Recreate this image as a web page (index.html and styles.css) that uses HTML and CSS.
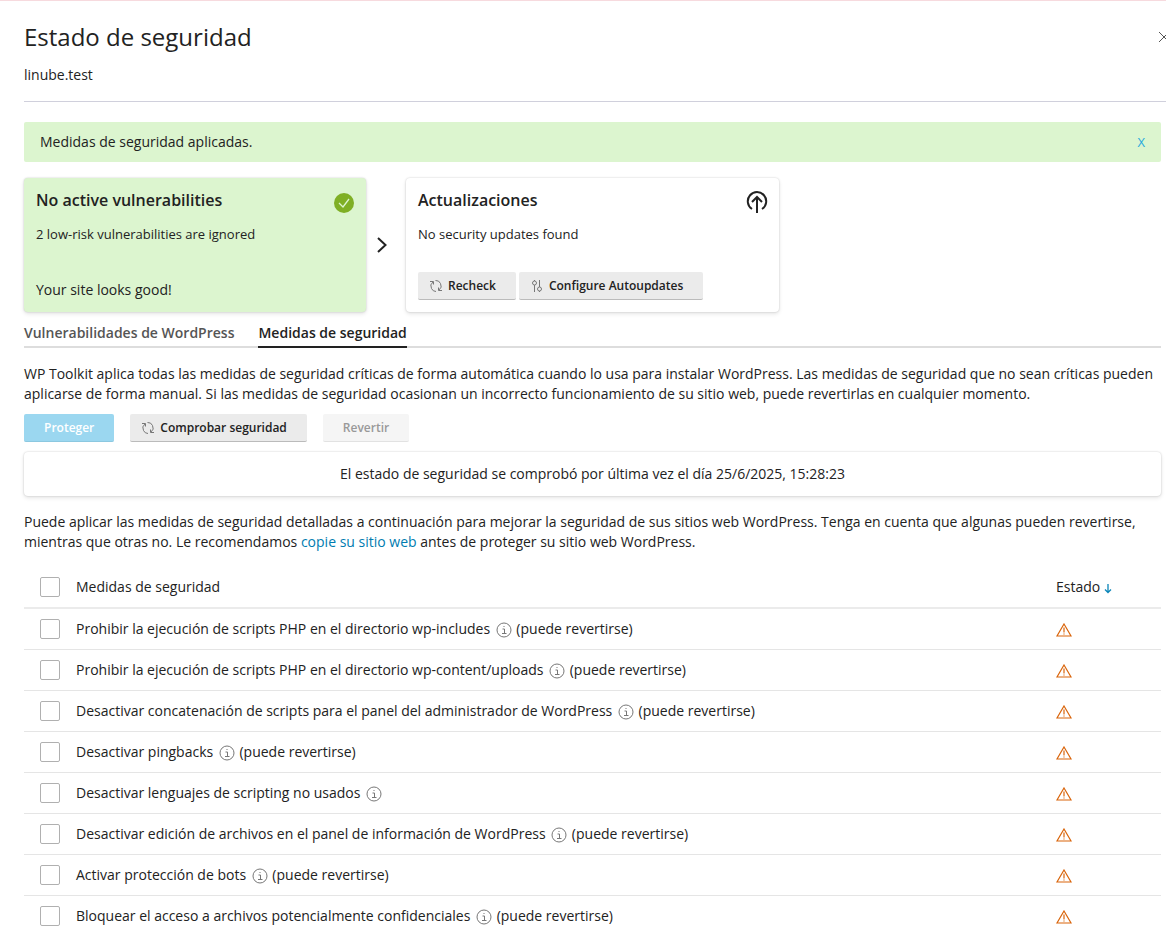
FILE: index.html
```html
<!DOCTYPE html>
<html lang="es">
<head>
    <meta charset="utf-8">
    <meta name="viewport" content="width=device-width, initial-scale=1">
    <title>Estado de seguridad</title>
    <link rel="stylesheet" href="styles.css">
</head>
<body>
<!-- Shared icons -->
<svg class="icon-defs" aria-hidden="true">
    <symbol id="icon-refresh" viewBox="0 0 12 12">
        <path d="M0 1.500h3.500V4.500M3 2A5 5 0 0 0 1.500 8.500 5 5 0 0 0 6 11.500M12 10.500H8.500V7.500M9 10A5 5 0 0 0 10.500 3.500 5 5 0 0 0 5.500 .5"/>
    </symbol>
    <symbol id="icon-info" viewBox="0 0 16 16">
        <circle cx="8" cy="8" r="7"/>
        <path d="M6.500 7h2v4.500M6 11.500h4.500M7.500 4.500h1"/>
    </symbol>
    <symbol id="icon-warning" viewBox="0 0 16 14">
        <path d="M8 1L15 13H1zM8 4.500v5M8 10.500v1"/>
    </symbol>
</svg>

<header class="header">
    <div>
        <h1 class="title">Estado de seguridad</h1>
        <div class="subtitle">linube.test</div>
    </div>
    <button type="button" class="close" aria-label="Cerrar">
        <svg width="12" height="12" viewBox="0 0 12 12"><path d="M1 1l10 10M11 1L1 11"/></svg>
    </button>
</header>

<main class="content">
    <div class="alert">
        <span>Medidas de seguridad aplicadas.</span>
        <button type="button" class="alert-close">X</button>
    </div>

    <div class="cards">
        <section class="card card-ok">
            <div class="card-head">
                <h2>No active vulnerabilities</h2>
                <svg class="card-icon" width="22" height="24" viewBox="0 0 22 24">
                    <circle cx="11" cy="13" r="10" fill="#7faf25"/>
                    <path d="M6 13l4 4 6-8" fill="none" stroke="#dcf5cf" stroke-width="1.3"/>
                </svg>
            </div>
            <p class="card-note">2 low-risk vulnerabilities are ignored</p>
            <p class="card-foot">Your site looks good!</p>
        </section>
        <svg class="chevron" width="10" height="16" viewBox="0 0 10 16"><path d="M1 1l7.500 7L1 15"/></svg>
        <section class="card card-updates">
            <div class="card-head">
                <h2>Actualizaciones</h2>
                <svg class="card-icon" width="22" height="24" viewBox="0 0 22 24" fill="none" stroke="#222" stroke-width="2">
                    <path d="M6 19A9.200 9.200 0 1 1 16 19M11 23V7M6 12l5-5 5 5"/>
                </svg>
            </div>
            <p class="card-note">No security updates found</p>
            <div class="card-foot">
                <button type="button" class="btn btn-icon"><svg width="12" height="12"><use href="#icon-refresh"/></svg>Recheck</button>
                <button type="button" class="btn btn-icon"><svg width="12" height="12" viewBox="0 0 12 12"><circle cx="3.500" cy="3" r="2"/><circle cx="8.500" cy="9" r="2"/><path d="M3.500 5v7M8.500 0v7M8.500 11v1M3.500 0v1"/></svg>Configure Autoupdates</button>
            </div>
        </section>
    </div>

    <nav class="tabs">
        <a href="#" class="tab">Vulnerabilidades de WordPress</a>
        <a href="#" class="tab active">Medidas de seguridad</a>
    </nav>

    <p class="intro">WP Toolkit aplica todas las medidas de seguridad críticas de forma automática cuando lo usa para instalar WordPress. Las medidas de seguridad que no sean críticas pueden aplicarse de forma manual. Si las medidas de seguridad ocasionan un incorrecto funcionamiento de su sitio web, puede revertirlas en cualquier momento.</p>

    <div class="toolbar">
        <button type="button" class="btn btn-primary" disabled>Proteger</button>
        <button type="button" class="btn btn-icon"><svg width="12" height="12"><use href="#icon-refresh"/></svg>Comprobar seguridad</button>
        <button type="button" class="btn btn-muted" disabled>Revertir</button>
    </div>

    <div class="last-check">El estado de seguridad se comprobó por última vez el día 25/6/2025, 15:28:23</div>

    <p class="help">Puede aplicar las medidas de seguridad detalladas a continuación para mejorar la seguridad de sus sitios web WordPress. Tenga en cuenta que algunas pueden revertirse, mientras que otras no. Le recomendamos <a href="#">copie su sitio web</a> antes de proteger su sitio web WordPress.</p>

    <table class="measures">
        <thead>
            <tr>
                <th class="col-check"><input type="checkbox" id="all"></th>
                <th><label for="all">Medidas de seguridad</label></th>
                <th class="col-state">Estado <svg class="sort" width="8" height="10" viewBox="0 0 8 10"><path d="M4 0v8.500M1 5.500l3 3 3-3"/></svg></th>
            </tr>
        </thead>
        <tbody>
            <tr>
                <td><input type="checkbox" id="m1"></td>
                <td><label for="m1">Prohibir la ejecución de scripts PHP en el directorio wp-includes <svg class="info"><use href="#icon-info"/></svg> (puede revertirse)</label></td>
                <td class="col-state"><svg class="warning"><use href="#icon-warning"/></svg></td>
            </tr>
            <tr>
                <td><input type="checkbox" id="m2"></td>
                <td><label for="m2">Prohibir la ejecución de scripts PHP en el directorio wp-content/uploads <svg class="info"><use href="#icon-info"/></svg> (puede revertirse)</label></td>
                <td class="col-state"><svg class="warning"><use href="#icon-warning"/></svg></td>
            </tr>
            <tr>
                <td><input type="checkbox" id="m3"></td>
                <td><label for="m3">Desactivar concatenación de scripts para el panel del administrador de WordPress <svg class="info"><use href="#icon-info"/></svg> (puede revertirse)</label></td>
                <td class="col-state"><svg class="warning"><use href="#icon-warning"/></svg></td>
            </tr>
            <tr>
                <td><input type="checkbox" id="m4"></td>
                <td><label for="m4">Desactivar pingbacks <svg class="info"><use href="#icon-info"/></svg> (puede revertirse)</label></td>
                <td class="col-state"><svg class="warning"><use href="#icon-warning"/></svg></td>
            </tr>
            <tr>
                <td><input type="checkbox" id="m5"></td>
                <td><label for="m5">Desactivar lenguajes de scripting no usados <svg class="info"><use href="#icon-info"/></svg></label></td>
                <td class="col-state"><svg class="warning"><use href="#icon-warning"/></svg></td>
            </tr>
            <tr>
                <td><input type="checkbox" id="m6"></td>
                <td><label for="m6">Desactivar edición de archivos en el panel de información de WordPress <svg class="info"><use href="#icon-info"/></svg> (puede revertirse)</label></td>
                <td class="col-state"><svg class="warning"><use href="#icon-warning"/></svg></td>
            </tr>
            <tr>
                <td><input type="checkbox" id="m7"></td>
                <td><label for="m7">Activar protección de bots <svg class="info"><use href="#icon-info"/></svg> (puede revertirse)</label></td>
                <td class="col-state"><svg class="warning"><use href="#icon-warning"/></svg></td>
            </tr>
            <tr>
                <td><input type="checkbox" id="m8"></td>
                <td><label for="m8">Bloquear el acceso a archivos potencialmente confidenciales <svg class="info"><use href="#icon-info"/></svg> (puede revertirse)</label></td>
                <td class="col-state"><svg class="warning"><use href="#icon-warning"/></svg></td>
            </tr>
        </tbody>
    </table>
</main>
</body>
</html>
```

FILE: styles.css
```css
* {
    box-sizing: border-box;
}
body {
    margin: 0;
    border-top: 1px solid #f7dade;
    background-color: #fff;
    color: #222;
    font-family: "Open Sans", sans-serif;
    font-size: 14px;
    line-height: 20px;
    overflow-x: hidden;
}
/* Scrolls without a visible bar */
html {
    scrollbar-width: none;
}
h1, h2, p {
    margin: 0;
}
a {
    color: #007cb0;
    text-decoration: none;
}
button {
    font-family: inherit;
    cursor: pointer;
}
.icon-defs {
    display: none;
}

/* Header */
.header {
    display: flex;
    justify-content: space-between;
    align-items: flex-start;
    margin-left: 24px;
    padding: 20px 0 16px;
    border-bottom: 1px solid #d0d0dc;
}
.title {
    font-size: 24px;
    font-weight: 400;
    line-height: 32px;
    margin-bottom: 12px;
}
.close {
    display: flex;
    padding: 10px 0;
    margin-right: -4px;
    border: none;
    background: none;
}
.close svg {
    fill: none;
    stroke: #555;
}

.content {
    padding: 20px 5px 20px 24px;
}
.alert {
    display: flex;
    justify-content: space-between;
    padding: 10px 16px;
    border-radius: 2px;
    background-color: #dcf5cf;
}
.alert-close {
    padding: 0;
    border: none;
    background: none;
    color: #28aade;
    font-size: 13px;
}

/* Status cards */
.cards {
    display: flex;
    align-items: center;
    margin-top: 16px;
}
.card {
    display: flex;
    flex-direction: column;
    height: 134px;
    padding: 12px;
    border-radius: 4px;
    box-shadow: 0 0 2px rgba(0,0,0,0.2), 0 2px 4px rgba(0,0,0,0.1);
}
.card-ok {
    width: 342px;
    background-color: #dcf5cf;
}
.card-updates {
    width: 373px;
}
.card-head {
    display: flex;
    justify-content: space-between;
}
.card h2 {
    font-size: 16px;
    font-weight: 600;
}
.card-icon {
    margin-right: -1px;
}
.card-note {
    margin-top: 10px;
    font-size: 13px;
}
.card-foot {
    display: flex;
    gap: 3px;
    margin-top: auto;
}
.chevron {
    margin: 0 19px 0 11px;
    fill: none;
    stroke: #222;
    stroke-width: 2;
}

/* Buttons */
.btn {
    display: flex;
    align-items: center;
    height: 28px;
    padding: 0 20px;
    border: none;
    border-bottom: 1px solid #bbb;
    border-radius: 2px;
    background-color: #ebebeb;
    color: #222;
    font-size: 12px;
    font-weight: 600;
}
.btn-icon {
    gap: 6px;
    padding-left: 12px;
}
.btn svg {
    fill: none;
    stroke: #777;
}
.btn-primary {
    background-color: #9bd7f0;
    border-bottom-color: #8cc8e0;
    color: #fff;
}
.btn-muted {
    background-color: #f5f5f5;
    border-bottom-color: #e2e2e2;
    color: #999;
}
.toolbar {
    display: flex;
    gap: 16px;
    margin: 10px 0;
}

/* Tabs */
.tabs {
    display: flex;
    gap: 24px;
    margin-top: 11px;
    margin-bottom: 16px;
    border-bottom: 2px solid #ddd;
}
.tab {
    margin-bottom: -2px;
    padding-bottom: 3px;
    border-bottom: 2px solid transparent;
    color: #555;
    font-weight: 600;
}
.tab.active {
    border-bottom-color: #222;
    color: #222;
}

.last-check {
    padding: 12px;
    border-radius: 4px;
    box-shadow: 0 0 2px rgba(0,0,0,0.2), 0 2px 4px rgba(0,0,0,0.1);
    text-align: center;
}
.help {
    margin: 16px 0 14px;
}

/* Measures table */
.measures {
    width: 100%;
    border-collapse: separate;
    border-spacing: 0;
}
.measures th, .measures td {
    height: 41px;
    padding: 0 0 0 16px;
    border-bottom: 1px solid #e5e5e5;
    font-weight: 400;
    text-align: left;
}
.measures th {
    height: 43px;
    border-bottom: 2px solid #ebebeb;
}
.measures .col-check {
    width: 36px;
}
.measures .col-state {
    width: 121px;
}
.measures input {
    display: block;
    width: 20px;
    height: 20px;
    margin: 0;
    appearance: none;
    border: 1px solid #b0b0b0;
    border-radius: 2px;
    background-color: #fff;
}
.measures input:checked {
    background-color: #28aade;
}
.measures svg {
    fill: none;
}
.info {
    width: 16px;
    height: 16px;
    margin: 0 1px 0 2px;
    stroke: #777;
    vertical-align: -4px;
}
.warning {
    display: block;
    width: 16px;
    height: 14px;
    margin-top: 2px;
    stroke: #d9640a;
    stroke-width: 1.2;
}
.sort {
    stroke: #0a85b8;
    stroke-width: 1.3;
    vertical-align: -2px;
}
```
